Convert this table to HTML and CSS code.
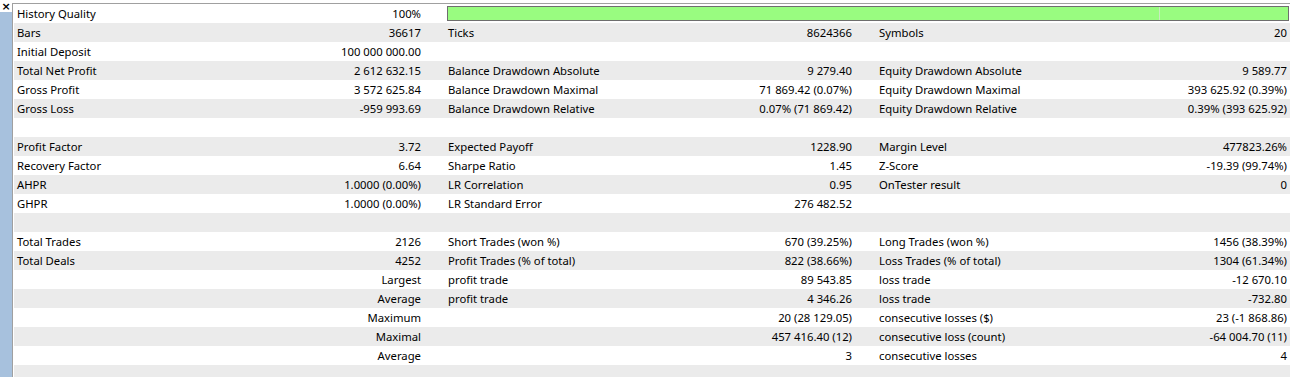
FILE: index.html
```html
<!DOCTYPE html>
<html>
<head>
<meta charset="utf-8">
<link rel="stylesheet" href="styles.css">
</head>
<body>
<div class="window">
  <div class="sidebar">
    <div class="close">×</div>
    <div class="strip"></div>
  </div>
  <div class="divider"></div>
  <div class="report">
    <div class="row">
      <div class="lbl">History Quality</div><div class="val">100%</div>
      <div class="barcell"><div class="bar"><div class="bar-mark"></div></div></div>
    </div>
    <div class="row">
      <div class="lbl">Bars</div><div class="val">36617</div>
      <div class="lbl">Ticks</div><div class="val">8624366</div>
      <div class="lbl">Symbols</div><div class="val last">20</div>
    </div>
    <div class="row">
      <div class="lbl">Initial Deposit</div><div class="val">100 000 000.00</div>
      <div class="lbl"></div><div class="val"></div>
      <div class="lbl"></div><div class="val last"></div>
    </div>
    <div class="row">
      <div class="lbl">Total Net Profit</div><div class="val">2 612 632.15</div>
      <div class="lbl">Balance Drawdown Absolute</div><div class="val">9 279.40</div>
      <div class="lbl">Equity Drawdown Absolute</div><div class="val last">9 589.77</div>
    </div>
    <div class="row">
      <div class="lbl">Gross Profit</div><div class="val">3 572 625.84</div>
      <div class="lbl">Balance Drawdown Maximal</div><div class="val">71 869.42 (0.07%)</div>
      <div class="lbl">Equity Drawdown Maximal</div><div class="val last">393 625.92 (0.39%)</div>
    </div>
    <div class="row">
      <div class="lbl">Gross Loss</div><div class="val">-959 993.69</div>
      <div class="lbl">Balance Drawdown Relative</div><div class="val">0.07% (71 869.42)</div>
      <div class="lbl">Equity Drawdown Relative</div><div class="val last">0.39% (393 625.92)</div>
    </div>
    <div class="row"></div>
    <div class="row">
      <div class="lbl">Profit Factor</div><div class="val">3.72</div>
      <div class="lbl">Expected Payoff</div><div class="val">1228.90</div>
      <div class="lbl">Margin Level</div><div class="val last">477823.26%</div>
    </div>
    <div class="row">
      <div class="lbl">Recovery Factor</div><div class="val">6.64</div>
      <div class="lbl">Sharpe Ratio</div><div class="val">1.45</div>
      <div class="lbl">Z-Score</div><div class="val last">-19.39 (99.74%)</div>
    </div>
    <div class="row">
      <div class="lbl">AHPR</div><div class="val">1.0000 (0.00%)</div>
      <div class="lbl">LR Correlation</div><div class="val">0.95</div>
      <div class="lbl">OnTester result</div><div class="val last">0</div>
    </div>
    <div class="row">
      <div class="lbl">GHPR</div><div class="val">1.0000 (0.00%)</div>
      <div class="lbl">LR Standard Error</div><div class="val">276 482.52</div>
      <div class="lbl"></div><div class="val last"></div>
    </div>
    <div class="row"></div>
    <div class="row">
      <div class="lbl">Total Trades</div><div class="val">2126</div>
      <div class="lbl">Short Trades (won %)</div><div class="val">670 (39.25%)</div>
      <div class="lbl">Long Trades (won %)</div><div class="val last">1456 (38.39%)</div>
    </div>
    <div class="row">
      <div class="lbl">Total Deals</div><div class="val">4252</div>
      <div class="lbl">Profit Trades (% of total)</div><div class="val">822 (38.66%)</div>
      <div class="lbl">Loss Trades (% of total)</div><div class="val last">1304 (61.34%)</div>
    </div>
    <div class="row">
      <div class="lbl"></div><div class="val">Largest</div>
      <div class="lbl">profit trade</div><div class="val">89 543.85</div>
      <div class="lbl">loss trade</div><div class="val last">-12 670.10</div>
    </div>
    <div class="row">
      <div class="lbl"></div><div class="val">Average</div>
      <div class="lbl">profit trade</div><div class="val">4 346.26</div>
      <div class="lbl">loss trade</div><div class="val last">-732.80</div>
    </div>
    <div class="row">
      <div class="lbl"></div><div class="val">Maximum</div>
      <div class="lbl"></div><div class="val">20 (28 129.05)</div>
      <div class="lbl">consecutive losses ($)</div><div class="val last">23 (-1 868.86)</div>
    </div>
    <div class="row">
      <div class="lbl"></div><div class="val">Maximal</div>
      <div class="lbl"></div><div class="val">457 416.40 (12)</div>
      <div class="lbl">consecutive loss (count)</div><div class="val last">-64 004.70 (11)</div>
    </div>
    <div class="row">
      <div class="lbl"></div><div class="val">Average</div>
      <div class="lbl"></div><div class="val">3</div>
      <div class="lbl">consecutive losses</div><div class="val last">4</div>
    </div>
    <div class="row"></div>
  </div>
</div>
</body>
</html>
```
FILE: styles.css
```css
html, body {
  margin: 0;
  padding: 0;
  background: #ffffff;
  overflow: hidden;
}

.window {
  display: flex;
  width: 1290px;
  height: 377px;
  font-family: "Noto Sans", "Open Sans", sans-serif;
  font-size: 11.3px;
  color: #000000;
}

.sidebar {
  width: 12px;
  display: flex;
  flex-direction: column;
}

.close {
  height: 12px;
  background: #ffffff;
  font-family: "DejaVu Sans", sans-serif;
  font-weight: bold;
  font-size: 11px;
  line-height: 14px;
  text-align: center;
  color: #000;
}

.strip {
  flex: 1;
  background: #a7c1dd;
}

.divider {
  width: 1px;
  margin-top: 3px;
  background: #a0a0a0;
}

.report {
  flex: 1;
  margin-top: 3px;
  border-top: 1px solid #a0a0a0;
  padding-left: 1px;
  display: flex;
  flex-direction: column;
}

.row {
  display: grid;
  grid-template-columns: 200px 231px 200px 231px 200px 214px;
  height: 19px;
  line-height: 19px;
  flex: none;
}

.row:nth-child(even) {
  background: #ebebeb;
}

.lbl {
  padding-left: 3px;
  white-space: nowrap;
  overflow: hidden;
}

.val {
  padding-right: 24px;
  text-align: right;
  white-space: nowrap;
}

.val.last {
  padding-right: 3px;
}

.barcell {
  grid-column: 3 / 7;
  padding: 2px 1px 2px 2px;
}

.bar {
  position: relative;
  height: 13px;
  border: 1px solid #6e6e6e;
  background: #99fc80;
}

.bar-mark {
  position: absolute;
  top: 0;
  bottom: 0;
  left: 711px;
  width: 1px;
  background: #c8eac0;
}
```
